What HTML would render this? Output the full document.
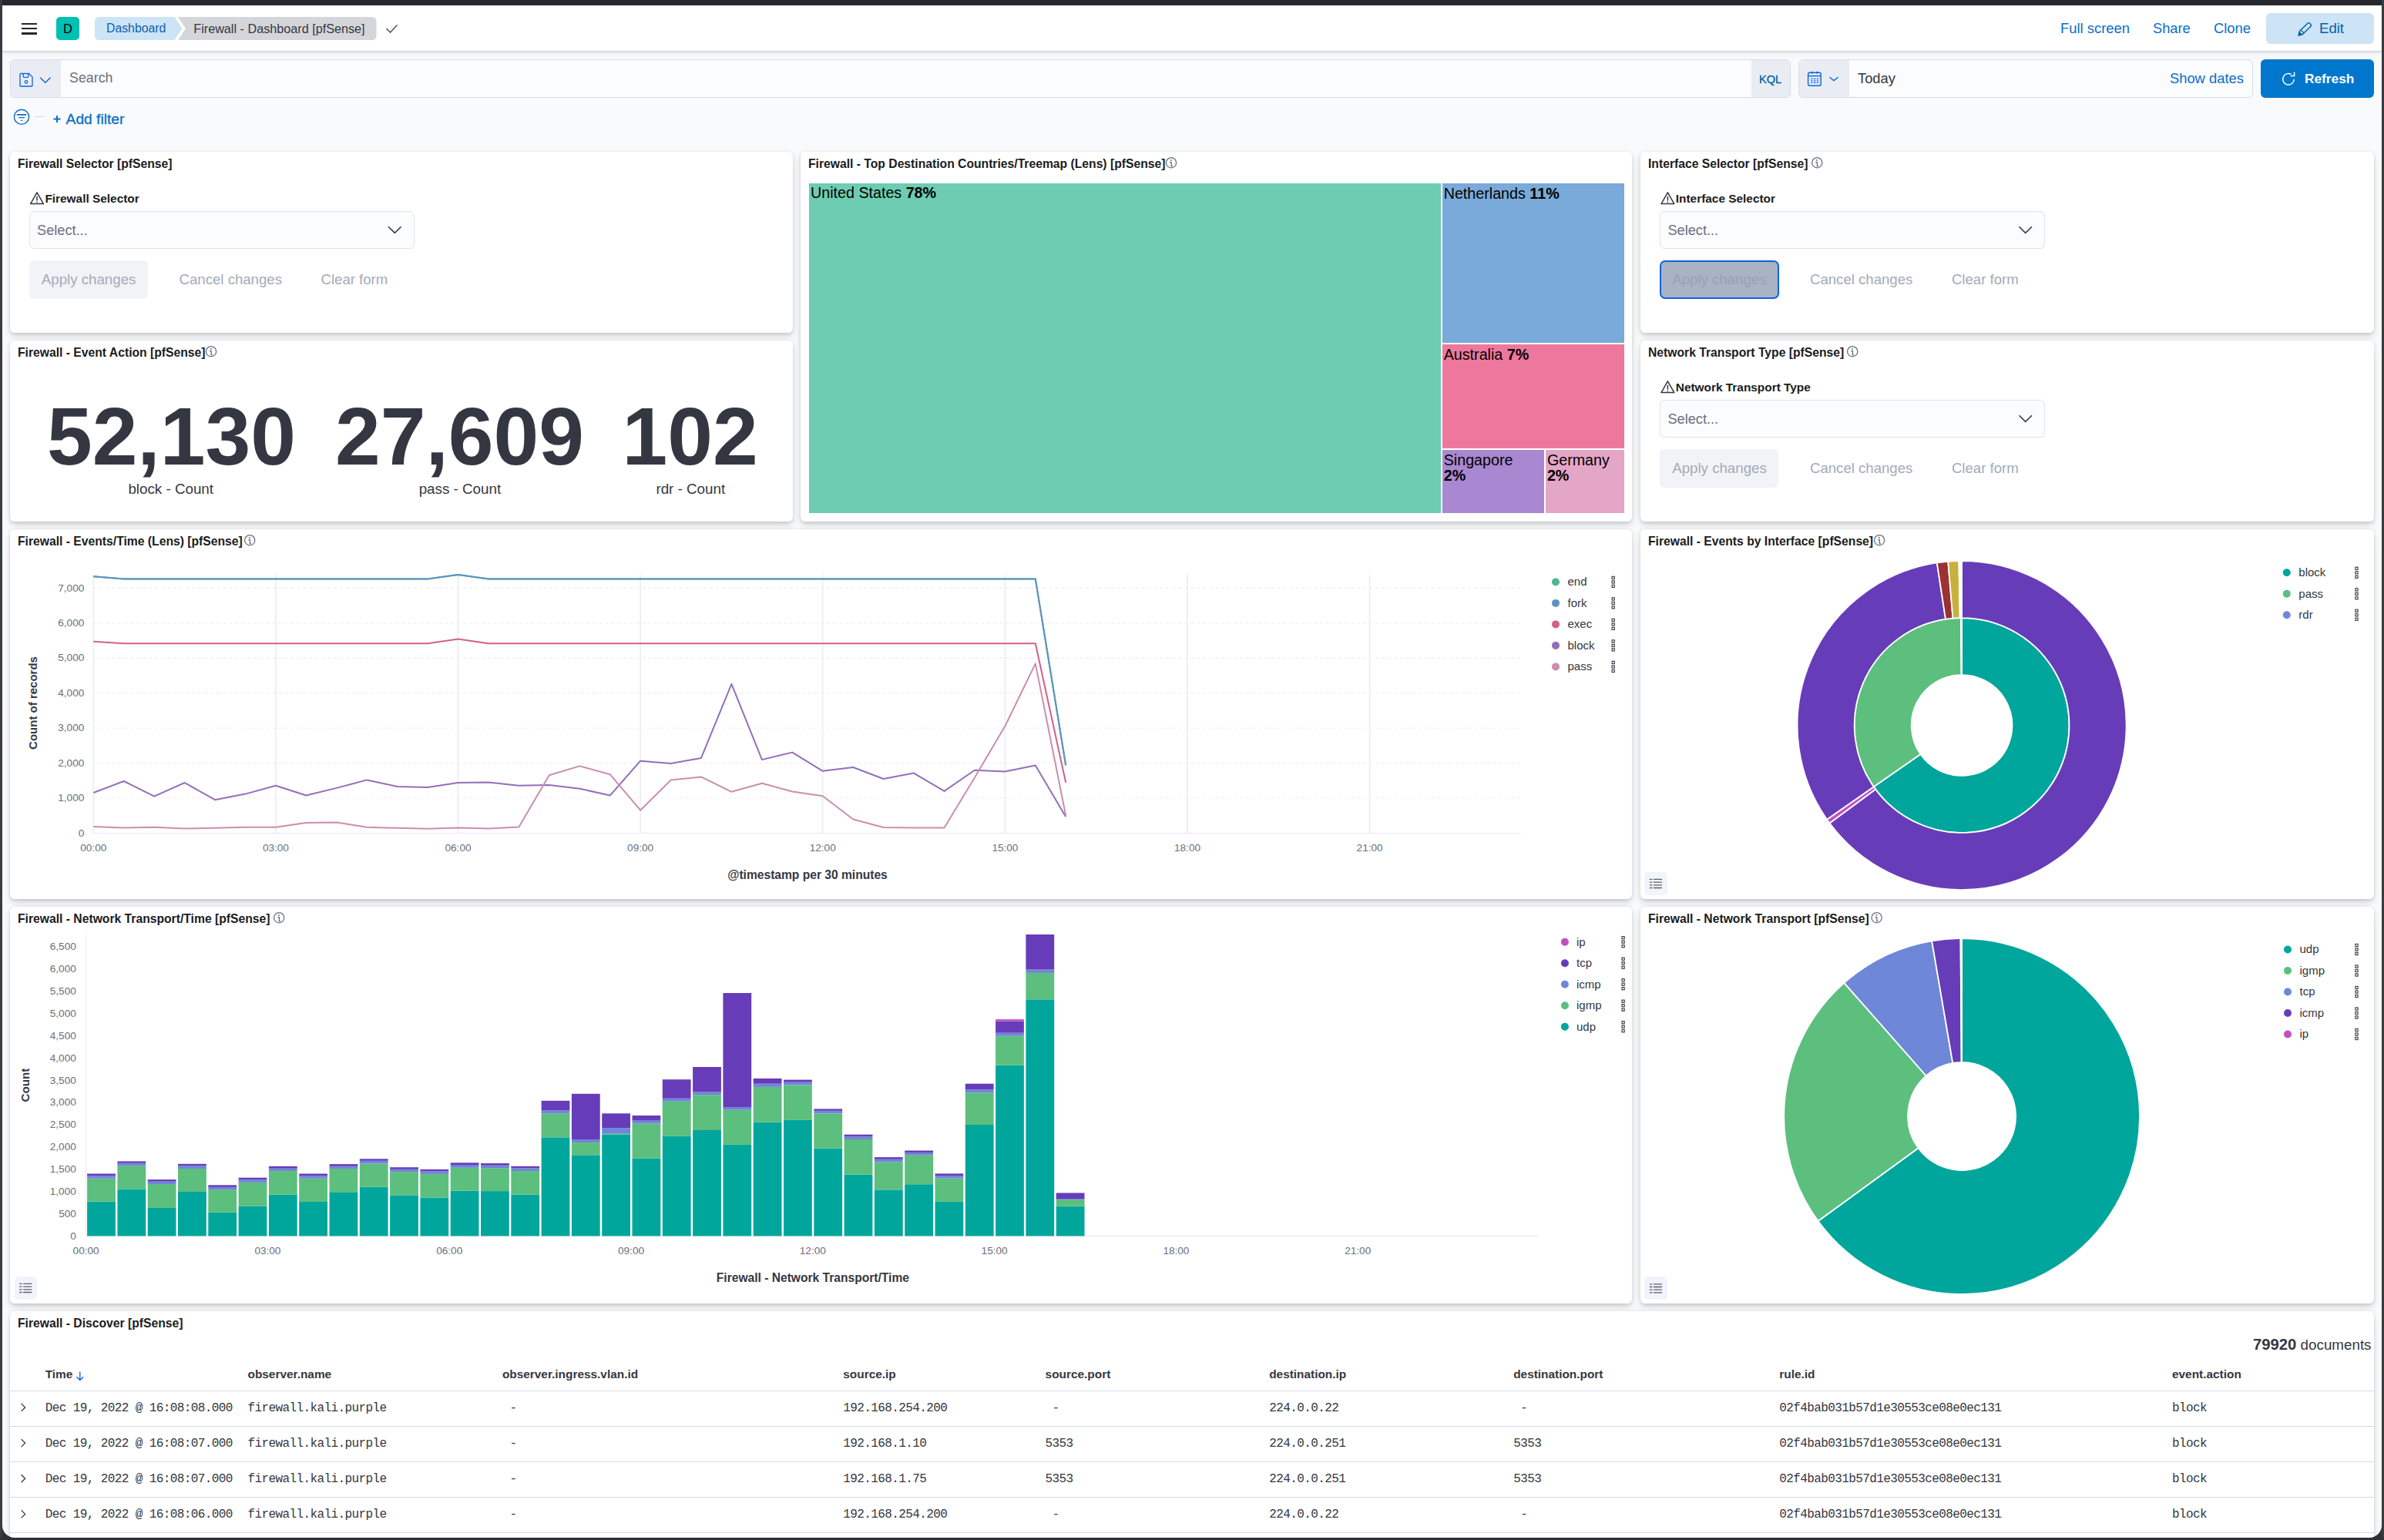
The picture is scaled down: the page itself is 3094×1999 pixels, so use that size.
<!DOCTYPE html><html><head><meta charset="utf-8"><style>
html,body{margin:0;padding:0;width:3094px;height:1999px;overflow:hidden;background:#f7f8fc;font-family:"Liberation Sans",sans-serif}
.r{position:absolute}
.t{position:absolute;white-space:nowrap}
svg{position:absolute;overflow:visible}
</style></head><body>
<div class="r" style="left:0.0px;top:0.0px;width:3094.0px;height:1999.0px;background:#f9fafc;"></div>
<div class="r" style="left:13.0px;top:197.0px;width:1016.0px;height:235.0px;background:#fff;border-radius:6px;box-shadow:0 1.5px 4px rgba(0,0,0,0.11),0 3.5px 9px rgba(0,0,0,0.075),0 7px 13px rgba(0,0,0,0.05);"></div>
<div class="r" style="left:1039.0px;top:197.0px;width:1079.0px;height:480.0px;background:#fff;border-radius:6px;box-shadow:0 1.5px 4px rgba(0,0,0,0.11),0 3.5px 9px rgba(0,0,0,0.075),0 7px 13px rgba(0,0,0,0.05);"></div>
<div class="r" style="left:2129.0px;top:197.0px;width:952.0px;height:235.0px;background:#fff;border-radius:6px;box-shadow:0 1.5px 4px rgba(0,0,0,0.11),0 3.5px 9px rgba(0,0,0,0.075),0 7px 13px rgba(0,0,0,0.05);"></div>
<div class="r" style="left:13.0px;top:442.0px;width:1016.0px;height:235.0px;background:#fff;border-radius:6px;box-shadow:0 1.5px 4px rgba(0,0,0,0.11),0 3.5px 9px rgba(0,0,0,0.075),0 7px 13px rgba(0,0,0,0.05);"></div>
<div class="r" style="left:2129.0px;top:442.0px;width:952.0px;height:235.0px;background:#fff;border-radius:6px;box-shadow:0 1.5px 4px rgba(0,0,0,0.11),0 3.5px 9px rgba(0,0,0,0.075),0 7px 13px rgba(0,0,0,0.05);"></div>
<div class="r" style="left:13.0px;top:687.0px;width:2105.0px;height:480.0px;background:#fff;border-radius:6px;box-shadow:0 1.5px 4px rgba(0,0,0,0.11),0 3.5px 9px rgba(0,0,0,0.075),0 7px 13px rgba(0,0,0,0.05);"></div>
<div class="r" style="left:2129.0px;top:687.0px;width:952.0px;height:480.0px;background:#fff;border-radius:6px;box-shadow:0 1.5px 4px rgba(0,0,0,0.11),0 3.5px 9px rgba(0,0,0,0.075),0 7px 13px rgba(0,0,0,0.05);"></div>
<div class="r" style="left:13.0px;top:1177.0px;width:2105.0px;height:515.0px;background:#fff;border-radius:6px;box-shadow:0 1.5px 4px rgba(0,0,0,0.11),0 3.5px 9px rgba(0,0,0,0.075),0 7px 13px rgba(0,0,0,0.05);"></div>
<div class="r" style="left:2129.0px;top:1177.0px;width:952.0px;height:515.0px;background:#fff;border-radius:6px;box-shadow:0 1.5px 4px rgba(0,0,0,0.11),0 3.5px 9px rgba(0,0,0,0.075),0 7px 13px rgba(0,0,0,0.05);"></div>
<div class="r" style="left:13.0px;top:1702.0px;width:3068.0px;height:328.0px;background:#fff;border-radius:6px;box-shadow:0 1.5px 4px rgba(0,0,0,0.11),0 3.5px 9px rgba(0,0,0,0.075),0 7px 13px rgba(0,0,0,0.05);"></div>
<div class="t" style="left:23.0px;top:205.2px;font-size:15.7px;line-height:15.7px;color:#1a1c21;font-weight:bold;font-family:'Liberation Sans', sans-serif;">Firewall Selector [pfSense]</div>
<div class="t" style="left:1049.0px;top:205.2px;font-size:15.7px;line-height:15.7px;color:#1a1c21;font-weight:bold;font-family:'Liberation Sans', sans-serif;">Firewall - Top Destination Countries/Treemap (Lens) [pfSense]</div>
<svg style="left:1511px;top:202px;" width="18" height="18" viewBox="1511 202 18 18"><circle cx="1520" cy="211.2" r="6.6" fill="none" stroke="#69707d" stroke-width="1.3"/><circle cx="1519.8" cy="208.0" r="1" fill="#69707d"/><path d="M1518 210.6 H1520.2 V215.5 H1521.8" fill="none" stroke="#69707d" stroke-width="1.3"/></svg>
<div class="t" style="left:2139.0px;top:205.2px;font-size:15.7px;line-height:15.7px;color:#1a1c21;font-weight:bold;font-family:'Liberation Sans', sans-serif;">Interface Selector [pfSense]</div>
<svg style="left:2349px;top:202px;" width="18" height="18" viewBox="2349 202 18 18"><circle cx="2358.2" cy="211.2" r="6.6" fill="none" stroke="#69707d" stroke-width="1.3"/><circle cx="2358.0" cy="208.0" r="1" fill="#69707d"/><path d="M2356.2 210.6 H2358.3999999999996 V215.5 H2360.0" fill="none" stroke="#69707d" stroke-width="1.3"/></svg>
<div class="t" style="left:23.0px;top:450.2px;font-size:15.7px;line-height:15.7px;color:#1a1c21;font-weight:bold;font-family:'Liberation Sans', sans-serif;">Firewall - Event Action [pfSense]</div>
<svg style="left:265px;top:447px;" width="18" height="18" viewBox="265 447 18 18"><circle cx="274" cy="456.2" r="6.6" fill="none" stroke="#69707d" stroke-width="1.3"/><circle cx="273.8" cy="453.0" r="1" fill="#69707d"/><path d="M272 455.59999999999997 H274.2 V460.5 H275.8" fill="none" stroke="#69707d" stroke-width="1.3"/></svg>
<div class="t" style="left:2139.0px;top:450.2px;font-size:15.7px;line-height:15.7px;color:#1a1c21;font-weight:bold;font-family:'Liberation Sans', sans-serif;">Network Transport Type [pfSense]</div>
<svg style="left:2395px;top:447px;" width="18" height="18" viewBox="2395 447 18 18"><circle cx="2404.2" cy="456.2" r="6.6" fill="none" stroke="#69707d" stroke-width="1.3"/><circle cx="2404.0" cy="453.0" r="1" fill="#69707d"/><path d="M2402.2 455.59999999999997 H2404.3999999999996 V460.5 H2406.0" fill="none" stroke="#69707d" stroke-width="1.3"/></svg>
<div class="t" style="left:23.0px;top:695.2px;font-size:15.7px;line-height:15.7px;color:#1a1c21;font-weight:bold;font-family:'Liberation Sans', sans-serif;">Firewall - Events/Time (Lens) [pfSense]</div>
<svg style="left:315px;top:692px;" width="18" height="18" viewBox="315 692 18 18"><circle cx="324.2" cy="701.2" r="6.6" fill="none" stroke="#69707d" stroke-width="1.3"/><circle cx="324.0" cy="698.0" r="1" fill="#69707d"/><path d="M322.2 700.6 H324.4 V705.5 H326.0" fill="none" stroke="#69707d" stroke-width="1.3"/></svg>
<div class="t" style="left:2139.0px;top:695.2px;font-size:15.7px;line-height:15.7px;color:#1a1c21;font-weight:bold;font-family:'Liberation Sans', sans-serif;">Firewall - Events by Interface [pfSense]</div>
<svg style="left:2430px;top:692px;" width="18" height="18" viewBox="2430 692 18 18"><circle cx="2439.1" cy="701.2" r="6.6" fill="none" stroke="#69707d" stroke-width="1.3"/><circle cx="2438.9" cy="698.0" r="1" fill="#69707d"/><path d="M2437.1 700.6 H2439.2999999999997 V705.5 H2440.9" fill="none" stroke="#69707d" stroke-width="1.3"/></svg>
<div class="t" style="left:23.0px;top:1185.2px;font-size:15.7px;line-height:15.7px;color:#1a1c21;font-weight:bold;font-family:'Liberation Sans', sans-serif;">Firewall - Network Transport/Time [pfSense]</div>
<svg style="left:353px;top:1182px;" width="18" height="18" viewBox="353 1182 18 18"><circle cx="362.2" cy="1191.2" r="6.6" fill="none" stroke="#69707d" stroke-width="1.3"/><circle cx="362.0" cy="1188.0" r="1" fill="#69707d"/><path d="M360.2 1190.6000000000001 H362.4 V1195.5 H364.0" fill="none" stroke="#69707d" stroke-width="1.3"/></svg>
<div class="t" style="left:2139.0px;top:1185.2px;font-size:15.7px;line-height:15.7px;color:#1a1c21;font-weight:bold;font-family:'Liberation Sans', sans-serif;">Firewall - Network Transport [pfSense]</div>
<svg style="left:2426px;top:1182px;" width="18" height="18" viewBox="2426 1182 18 18"><circle cx="2435.6" cy="1191.2" r="6.6" fill="none" stroke="#69707d" stroke-width="1.3"/><circle cx="2435.4" cy="1188.0" r="1" fill="#69707d"/><path d="M2433.6 1190.6000000000001 H2435.7999999999997 V1195.5 H2437.4" fill="none" stroke="#69707d" stroke-width="1.3"/></svg>
<div class="t" style="left:23.0px;top:1710.2px;font-size:15.7px;line-height:15.7px;color:#1a1c21;font-weight:bold;font-family:'Liberation Sans', sans-serif;">Firewall - Discover [pfSense]</div>
<div class="r" style="left:3.0px;top:6.0px;width:3088.0px;height:60.0px;background:#fff;box-shadow:0 1px 0 #cfd4de,0 2px 3px rgba(0,0,0,0.10),0 4px 9px rgba(0,0,0,0.05);"></div>
<div class="r" style="left:28.0px;top:29.5px;width:20.0px;height:2.4px;background:#25282f;"></div>
<div class="r" style="left:28.0px;top:35.9px;width:20.0px;height:2.4px;background:#25282f;"></div>
<div class="r" style="left:28.0px;top:42.3px;width:20.0px;height:2.4px;background:#25282f;"></div>
<div class="r" style="left:73.0px;top:22.0px;width:30.0px;height:30.0px;background:#00bfb3;border-radius:5px;"></div>
<div class="t" style="left:-512.0px;width:1200px;text-align:center;top:29.0px;font-size:16.5px;line-height:16.5px;color:#000;font-weight:normal;font-family:'Liberation Sans', sans-serif;">D</div>
<svg style="left:120px;top:20px;" width="375" height="35" viewBox="120 20 375 35"><path d="M129 22 H226.5 L236.5 37 L226.5 52 H129 Q123 52 123 46 V28 Q123 22 129 22 Z" fill="#cce4f5"/><path d="M231 22 H482.5 Q488.5 22 488.5 28 V46 Q488.5 52 482.5 52 H231 L241 37 Z" fill="#d4d6da"/></svg>
<div class="t" style="left:138.0px;top:28.9px;font-size:15.8px;line-height:15.8px;color:#0f5fb0;font-weight:normal;font-family:'Liberation Sans', sans-serif;">Dashboard</div>
<div class="t" style="left:251.3px;top:28.6px;font-size:16.2px;line-height:16.2px;color:#343741;font-weight:normal;font-family:'Liberation Sans', sans-serif;">Firewall - Dashboard [pfSense]</div>
<svg style="left:495px;top:25px;" width="27" height="23" viewBox="495 25 27 23"><path d="M501.5 37 L506.5 42 L515.5 32.5" fill="none" stroke="#535966" stroke-width="1.6"/></svg>
<div class="t" style="left:2674.0px;top:27.7px;font-size:18.4px;line-height:18.4px;color:#0b6ec5;font-weight:normal;font-family:'Liberation Sans', sans-serif;">Full screen</div>
<div class="t" style="left:2794.0px;top:27.8px;font-size:18.3px;line-height:18.3px;color:#0b6ec5;font-weight:normal;font-family:'Liberation Sans', sans-serif;">Share</div>
<div class="t" style="left:2873.0px;top:27.7px;font-size:18.4px;line-height:18.4px;color:#0b6ec5;font-weight:normal;font-family:'Liberation Sans', sans-serif;">Clone</div>
<div class="r" style="left:2941.0px;top:17.0px;width:140.0px;height:40.0px;background:#cce4f5;border-radius:6px;"></div>
<svg style="left:2978px;top:25px;" width="24" height="24" viewBox="2978 25 24 24"><path d="M2983 46 L2984.2 40.8 L2994.6 30.4 Q2996.2 28.8 2997.8 30.4 L2998.6 31.2 Q3000.2 32.8 2998.6 34.4 L2988.2 44.8 Z" fill="none" stroke="#0061a6" stroke-width="1.4" stroke-linejoin="round"/><path d="M2986 38.9 L2990.1 43" stroke="#0061a6" stroke-width="1.3"/><path d="M2983 46 L2984.2 40.8 L2988.2 44.8 Z" fill="#0061a6"/></svg>
<div class="t" style="left:3010.0px;top:27.6px;font-size:18.6px;line-height:18.6px;color:#0061a6;font-weight:normal;font-family:'Liberation Sans', sans-serif;">Edit</div>
<div class="r" style="left:13.0px;top:77.0px;width:2310.5px;height:50.0px;background:#fbfcfd;border:1px solid #d5dbe8;border-radius:6px;box-sizing:border-box;"></div>
<div class="r" style="left:14.0px;top:78.0px;width:65.0px;height:48.0px;background:#e9edf3;border-radius:5px 0 0 5px;"></div>
<div class="r" style="left:2273.0px;top:78.0px;width:49.5px;height:48.0px;background:#e9edf3;border-radius:0 5px 5px 0;"></div>
<svg style="left:20px;top:88px;" width="52" height="30" viewBox="20 88 52 30"><path d="M26 96.5 Q26 95.5 27 95.5 H37.6 L42 99.9 V111 Q42 112 41 112 H27 Q26 112 26 111 Z" fill="none" stroke="#0b64dd" stroke-width="1.3" stroke-linejoin="round"/><path d="M30.2 95.5 V99.6 Q30.2 100.4 31 100.4 H36 Q36.8 100.4 36.8 99.6 V95.5" fill="none" stroke="#0b64dd" stroke-width="1.3"/><circle cx="34" cy="106.5" r="1.8" fill="none" stroke="#0b64dd" stroke-width="1.2"/><path d="M52.2 100.8 L58.8 107.2 L65.4 100.8" fill="none" stroke="#0b64dd" stroke-width="1.4"/></svg>
<div class="t" style="left:90.1px;top:93.2px;font-size:17.8px;line-height:17.8px;color:#69707d;font-weight:normal;font-family:'Liberation Sans', sans-serif;">Search</div>
<div class="t" style="left:1697.6px;width:1200px;text-align:center;top:95.8px;font-size:14.6px;line-height:14.6px;color:#0061a6;font-weight:normal;font-family:'Liberation Sans', sans-serif;-webkit-text-stroke:0.35px #0061a6;">KQL</div>
<div class="r" style="left:2334.0px;top:77.0px;width:590.0px;height:50.0px;background:#fbfcfd;border:1px solid #d5dbe8;border-radius:6px;box-sizing:border-box;"></div>
<div class="r" style="left:2335.0px;top:78.0px;width:65.0px;height:48.0px;background:#e9edf3;border-radius:5px 0 0 5px;"></div>
<svg style="left:2340px;top:85px;" width="55" height="35" viewBox="2340 85 55 35"><rect x="2346.6" y="94.2" width="16.6" height="17" rx="2.2" fill="none" stroke="#0b64dd" stroke-width="1.4"/><path d="M2346.6 98.6 H2363.2" stroke="#0b64dd" stroke-width="1.4"/><path d="M2351.6 92.8 V95.8 M2358.2 92.8 V95.8" stroke="#0b64dd" stroke-width="1.5"/><path d="M2350.2 102.4 H2360.2 M2350.2 104.9 H2360.2 M2350.2 107.4 H2360.2" stroke="#0b64dd" stroke-width="1.2" stroke-dasharray="2.4 1.4"/><path d="M2374.4 100.2 L2380 104.6 L2385.6 100.2" fill="none" stroke="#0b64dd" stroke-width="1.3"/></svg>
<div class="t" style="left:2411.0px;top:93.0px;font-size:18.3px;line-height:18.3px;color:#343741;font-weight:normal;font-family:'Liberation Sans', sans-serif;">Today</div>
<div class="t" style="right:182.0px;top:92.9px;font-size:18.4px;line-height:18.4px;color:#0b6ec5;font-weight:normal;font-family:'Liberation Sans', sans-serif;">Show dates</div>
<div class="r" style="left:2934.0px;top:77.0px;width:147.0px;height:50.0px;background:#0077cc;border-radius:6px;"></div>
<svg style="left:2955px;top:88px;" width="30" height="28" viewBox="2955 88 30 28"><path d="M2977.3 103 A7.3 7.3 0 1 1 2973.6 96.4" fill="none" stroke="#fff" stroke-width="1.5"/><path d="M2977.6 93.6 V98.6 H2972.6" fill="none" stroke="#fff" stroke-width="1.5"/></svg>
<div class="t" style="left:2991.0px;top:93.9px;font-size:17.3px;line-height:17.3px;color:#fff;font-weight:bold;font-family:'Liberation Sans', sans-serif;">Refresh</div>
<svg style="left:14px;top:138px;" width="76" height="28" viewBox="14 138 76 28"><circle cx="28" cy="151.8" r="9.6" fill="none" stroke="#0b6ec5" stroke-width="1.4"/><path d="M22.5 148.8 H33.5" stroke="#0b6ec5" stroke-width="1.8" stroke-linecap="round"/><path d="M24.6 152.6 H31.4" stroke="#0b6ec5" stroke-width="1.4" stroke-linecap="round"/><path d="M27.4 156.4 H28.6" stroke="#0b6ec5" stroke-width="1.4" stroke-linecap="round"/><path d="M45.5 151.3 H58" stroke="#d3dae6" stroke-width="1.2"/><path d="M69.5 154.5 H78.6 M74.05 150 V159" stroke="#0b6ec5" stroke-width="2"/></svg>
<div class="t" style="left:85.6px;top:145.0px;font-size:19.2px;line-height:19.2px;color:#0b6ec5;font-weight:normal;font-family:'Liberation Sans', sans-serif;-webkit-text-stroke:0.3px #0b6ec5;">Add filter</div>
<svg style="left:36px;top:246px;" width="24" height="22" viewBox="36 246 24 22"><path d="M48 249.8 L56.4 264.6 H39.6 Z" fill="none" stroke="#343741" stroke-width="1.5" stroke-linejoin="round"/><path d="M48 254.8 V260.6" stroke="#343741" stroke-width="1.5"/><circle cx="48" cy="262.4" r="0.8" fill="#343741"/></svg>
<div class="t" style="left:58.4px;top:250.4px;font-size:15.4px;line-height:15.4px;color:#1a1c21;font-weight:bold;font-family:'Liberation Sans', sans-serif;">Firewall Selector</div>
<div class="r" style="left:38.0px;top:273.5px;width:500.0px;height:49.0px;background:#fbfcfd;border:1px solid #dfe3ec;border-radius:6px;box-sizing:border-box;"></div>
<div class="t" style="left:48.0px;top:289.5px;font-size:18.2px;line-height:18.2px;color:#69707d;font-weight:normal;font-family:'Liberation Sans', sans-serif;">Select...</div>
<svg style="left:500px;top:290px;" width="25" height="17" viewBox="500 290 25 17"><path d="M504 294.2 L512.3 302.4 L520.6 294.2" fill="none" stroke="#343741" stroke-width="1.5"/></svg>
<div class="r" style="left:38.0px;top:338.3px;width:154.0px;height:49.4px;background:#f1f3f7;border-radius:6px;"></div>
<div class="t" style="left:53.8px;top:354.2px;font-size:18.7px;line-height:18.7px;color:#a2abba;font-weight:normal;font-family:'Liberation Sans', sans-serif;">Apply changes</div>
<div class="t" style="left:232.6px;top:354.3px;font-size:18.6px;line-height:18.6px;color:#a2abba;font-weight:normal;font-family:'Liberation Sans', sans-serif;">Cancel changes</div>
<div class="t" style="left:416.5px;top:354.3px;font-size:18.6px;line-height:18.6px;color:#a2abba;font-weight:normal;font-family:'Liberation Sans', sans-serif;">Clear form</div>
<svg style="left:2152px;top:246px;" width="24" height="22" viewBox="2152 246 24 22"><path d="M2164.4 249.8 L2172.8 264.6 H2156.0 Z" fill="none" stroke="#343741" stroke-width="1.5" stroke-linejoin="round"/><path d="M2164.4 254.8 V260.6" stroke="#343741" stroke-width="1.5"/><circle cx="2164.4" cy="262.4" r="0.8" fill="#343741"/></svg>
<div class="t" style="left:2174.8px;top:250.4px;font-size:15.4px;line-height:15.4px;color:#1a1c21;font-weight:bold;font-family:'Liberation Sans', sans-serif;">Interface Selector</div>
<div class="r" style="left:2154.4px;top:273.5px;width:500.0px;height:49.0px;background:#fbfcfd;border:1px solid #dfe3ec;border-radius:6px;box-sizing:border-box;"></div>
<div class="t" style="left:2164.4px;top:289.5px;font-size:18.2px;line-height:18.2px;color:#69707d;font-weight:normal;font-family:'Liberation Sans', sans-serif;">Select...</div>
<svg style="left:2616px;top:290px;" width="25" height="17" viewBox="2616 290 25 17"><path d="M2620.4 294.2 L2628.7 302.4 L2637.0 294.2" fill="none" stroke="#343741" stroke-width="1.5"/></svg>
<div class="r" style="left:2154.4px;top:338.3px;width:154.5px;height:49.7px;background:#a9b3c3;border:2.5px solid #0b64dd;border-radius:7px;box-sizing:border-box;"></div>
<div class="t" style="left:2170.2px;top:354.2px;font-size:18.7px;line-height:18.7px;color:#98a2b3;font-weight:normal;font-family:'Liberation Sans', sans-serif;">Apply changes</div>
<div class="t" style="left:2349.0px;top:354.3px;font-size:18.6px;line-height:18.6px;color:#a2abba;font-weight:normal;font-family:'Liberation Sans', sans-serif;">Cancel changes</div>
<div class="t" style="left:2532.9px;top:354.3px;font-size:18.6px;line-height:18.6px;color:#a2abba;font-weight:normal;font-family:'Liberation Sans', sans-serif;">Clear form</div>
<svg style="left:2152px;top:491px;" width="24" height="22" viewBox="2152 491 24 22"><path d="M2164.4 494.8 L2172.8 509.6 H2156.0 Z" fill="none" stroke="#343741" stroke-width="1.5" stroke-linejoin="round"/><path d="M2164.4 499.8 V505.6" stroke="#343741" stroke-width="1.5"/><circle cx="2164.4" cy="507.4" r="0.8" fill="#343741"/></svg>
<div class="t" style="left:2174.8px;top:495.4px;font-size:15.4px;line-height:15.4px;color:#1a1c21;font-weight:bold;font-family:'Liberation Sans', sans-serif;">Network Transport Type</div>
<div class="r" style="left:2154.4px;top:518.5px;width:500.0px;height:49.0px;background:#fbfcfd;border:1px solid #dfe3ec;border-radius:6px;box-sizing:border-box;"></div>
<div class="t" style="left:2164.4px;top:534.5px;font-size:18.2px;line-height:18.2px;color:#69707d;font-weight:normal;font-family:'Liberation Sans', sans-serif;">Select...</div>
<svg style="left:2616px;top:535px;" width="25" height="17" viewBox="2616 535 25 17"><path d="M2620.4 539.2 L2628.7 547.4 L2637.0 539.2" fill="none" stroke="#343741" stroke-width="1.5"/></svg>
<div class="r" style="left:2154.4px;top:583.3px;width:154.0px;height:49.4px;background:#f1f3f7;border-radius:6px;"></div>
<div class="t" style="left:2170.2px;top:599.2px;font-size:18.7px;line-height:18.7px;color:#a2abba;font-weight:normal;font-family:'Liberation Sans', sans-serif;">Apply changes</div>
<div class="t" style="left:2349.0px;top:599.3px;font-size:18.6px;line-height:18.6px;color:#a2abba;font-weight:normal;font-family:'Liberation Sans', sans-serif;">Cancel changes</div>
<div class="t" style="left:2532.9px;top:599.3px;font-size:18.6px;line-height:18.6px;color:#a2abba;font-weight:normal;font-family:'Liberation Sans', sans-serif;">Clear form</div>
<div class="r" style="left:1050.0px;top:238.0px;width:820.0px;height:427.6px;background:#6dccb1;"></div>
<div class="r" style="left:1871.7px;top:238.0px;width:236.3px;height:206.6px;background:#79aad9;"></div>
<div class="r" style="left:1871.7px;top:447.0px;width:236.3px;height:135.3px;background:#ee789d;"></div>
<div class="r" style="left:1871.7px;top:584.4px;width:132.0px;height:81.2px;background:#a987d1;"></div>
<div class="r" style="left:2005.8px;top:584.4px;width:102.2px;height:81.2px;background:#e4a6c7;"></div>
<div class="t" style="left:1052.0px;top:241.3px;font-size:19.7px;line-height:19.7px;color:#000;font-weight:normal;font-family:'Liberation Sans', sans-serif;">United States <b>78%</b></div>
<div class="t" style="left:1873.7px;top:241.5px;font-size:19.7px;line-height:19.7px;color:#000;font-weight:normal;font-family:'Liberation Sans', sans-serif;">Netherlands <b>11%</b></div>
<div class="t" style="left:1873.7px;top:450.6px;font-size:19.7px;line-height:19.7px;color:#000;font-weight:normal;font-family:'Liberation Sans', sans-serif;">Australia <b>7%</b></div>
<div class="t" style="left:1873.7px;top:588.0px;font-size:19.7px;line-height:19.7px;color:#000;font-weight:normal;font-family:'Liberation Sans', sans-serif;">Singapore</div>
<div class="t" style="left:1873.7px;top:608.0px;font-size:19.7px;line-height:19.7px;color:#000;font-weight:normal;font-family:'Liberation Sans', sans-serif;"><b>2%</b></div>
<div class="t" style="left:2007.9px;top:588.0px;font-size:19.7px;line-height:19.7px;color:#000;font-weight:normal;font-family:'Liberation Sans', sans-serif;">Germany</div>
<div class="t" style="left:2007.9px;top:608.0px;font-size:19.7px;line-height:19.7px;color:#000;font-weight:normal;font-family:'Liberation Sans', sans-serif;"><b>2%</b></div>
<div class="t" style="left:-377.6px;width:1200px;text-align:center;top:513.9px;font-size:105.6px;line-height:105.6px;color:#343741;font-weight:bold;font-family:'Liberation Sans', sans-serif;">52,130</div>
<div class="t" style="left:-3.5px;width:1200px;text-align:center;top:513.9px;font-size:105.6px;line-height:105.6px;color:#343741;font-weight:bold;font-family:'Liberation Sans', sans-serif;">27,609</div>
<div class="t" style="left:295.7px;width:1200px;text-align:center;top:513.9px;font-size:105.6px;line-height:105.6px;color:#343741;font-weight:bold;font-family:'Liberation Sans', sans-serif;">102</div>
<div class="t" style="left:-378.3px;width:1200px;text-align:center;top:626.1px;font-size:18.8px;line-height:18.8px;color:#343741;font-weight:normal;font-family:'Liberation Sans', sans-serif;">block - Count</div>
<div class="t" style="left:-3.1px;width:1200px;text-align:center;top:626.1px;font-size:18.8px;line-height:18.8px;color:#343741;font-weight:normal;font-family:'Liberation Sans', sans-serif;">pass - Count</div>
<div class="t" style="left:296.3px;width:1200px;text-align:center;top:626.1px;font-size:18.8px;line-height:18.8px;color:#343741;font-weight:normal;font-family:'Liberation Sans', sans-serif;">rdr - Count</div>
<svg style="left:100px;top:730px;" width="1900" height="360" viewBox="100 730 1900 360"><path d="M121.3 1036.0 H1973.4" stroke="#eceef2" stroke-width="1.2" stroke-dasharray="4 4"/><path d="M121.3 990.6 H1973.4" stroke="#eceef2" stroke-width="1.2" stroke-dasharray="4 4"/><path d="M121.3 945.1 H1973.4" stroke="#eceef2" stroke-width="1.2" stroke-dasharray="4 4"/><path d="M121.3 899.7 H1973.4" stroke="#eceef2" stroke-width="1.2" stroke-dasharray="4 4"/><path d="M121.3 854.2 H1973.4" stroke="#eceef2" stroke-width="1.2" stroke-dasharray="4 4"/><path d="M121.3 808.8 H1973.4" stroke="#eceef2" stroke-width="1.2" stroke-dasharray="4 4"/><path d="M121.3 763.3 H1973.4" stroke="#eceef2" stroke-width="1.2" stroke-dasharray="4 4"/><path d="M121.3 746 V1081.5" stroke="#eceef2" stroke-width="1.8"/><path d="M357.9 746 V1081.5" stroke="#eceef2" stroke-width="1.8"/><path d="M594.5 746 V1081.5" stroke="#eceef2" stroke-width="1.8"/><path d="M831.1 746 V1081.5" stroke="#eceef2" stroke-width="1.8"/><path d="M1067.7 746 V1081.5" stroke="#eceef2" stroke-width="1.8"/><path d="M1304.4 746 V1081.5" stroke="#eceef2" stroke-width="1.8"/><path d="M1541.0 746 V1081.5" stroke="#eceef2" stroke-width="1.8"/><path d="M1777.6 746 V1081.5" stroke="#eceef2" stroke-width="1.8"/><path d="M121.3 1081.5 H1973.4" stroke="#eceef2" stroke-width="1.5"/><polyline points="121.3,748.3 160.7,751.6 200.2,751.6 239.6,751.6 279.0,751.6 318.5,751.6 357.9,751.6 397.3,751.6 436.8,751.6 476.2,751.6 515.6,751.6 555.1,751.6 594.5,745.9 634.0,751.6 673.4,751.6 712.8,751.6 752.3,751.6 791.7,751.6 831.1,751.6 870.6,751.6 910.0,751.6 949.4,751.6 988.9,751.6 1028.3,751.6 1067.7,751.6 1107.2,751.6 1146.6,751.6 1186.0,751.6 1225.5,751.6 1264.9,751.6 1304.4,751.6 1343.8,751.6 1383.2,993.5" fill="none" stroke="#54b399" stroke-width="2" stroke-linejoin="round"/><polyline points="121.3,748.3 160.7,751.6 200.2,751.6 239.6,751.6 279.0,751.6 318.5,751.6 357.9,751.6 397.3,751.6 436.8,751.6 476.2,751.6 515.6,751.6 555.1,751.6 594.5,745.9 634.0,751.6 673.4,751.6 712.8,751.6 752.3,751.6 791.7,751.6 831.1,751.6 870.6,751.6 910.0,751.6 949.4,751.6 988.9,751.6 1028.3,751.6 1067.7,751.6 1107.2,751.6 1146.6,751.6 1186.0,751.6 1225.5,751.6 1264.9,751.6 1304.4,751.6 1343.8,751.6 1383.2,993.5" fill="none" stroke="#6092c0" stroke-width="2" stroke-linejoin="round"/><polyline points="121.3,832.7 160.7,835.2 200.2,835.2 239.6,835.2 279.0,835.2 318.5,835.2 357.9,835.2 397.3,835.2 436.8,835.2 476.2,835.2 515.6,835.2 555.1,835.2 594.5,829.5 634.0,835.2 673.4,835.2 712.8,835.2 752.3,835.2 791.7,835.2 831.1,835.2 870.6,835.2 910.0,835.2 949.4,835.2 988.9,835.2 1028.3,835.2 1067.7,835.2 1107.2,835.2 1146.6,835.2 1186.0,835.2 1225.5,835.2 1264.9,835.2 1304.4,835.2 1343.8,835.2 1383.2,1015.7" fill="none" stroke="#d36086" stroke-width="2" stroke-linejoin="round"/><polyline points="121.3,1029.0 160.7,1014.0 200.2,1033.7 239.6,1016.0 279.0,1038.2 318.5,1030.6 357.9,1019.7 397.3,1032.5 436.8,1022.9 476.2,1012.4 515.6,1021.0 555.1,1022.0 594.5,1016.0 634.0,1015.6 673.4,1019.7 712.8,1018.9 752.3,1023.7 791.7,1032.6 831.1,987.7 870.6,990.9 910.0,983.9 949.4,887.8 988.9,986.1 1028.3,976.6 1067.7,1000.8 1107.2,996.0 1146.6,1011.0 1186.0,1003.6 1225.5,1026.9 1264.9,999.8 1304.4,1001.4 1343.8,993.5 1383.2,1060.3" fill="none" stroke="#9170b8" stroke-width="2" stroke-linejoin="round"/><polyline points="121.3,1072.9 160.7,1074.5 200.2,1073.8 239.6,1075.4 279.0,1074.8 318.5,1073.8 357.9,1073.8 397.3,1068.1 436.8,1067.5 476.2,1073.8 515.6,1074.8 555.1,1075.7 594.5,1074.5 634.0,1075.4 673.4,1073.5 712.8,1006.2 752.3,994.4 791.7,1005.2 831.1,1051.7 870.6,1012.6 910.0,1008.4 949.4,1027.8 988.9,1016.7 1028.3,1027.5 1067.7,1033.2 1107.2,1063.5 1146.6,1074.0 1186.0,1074.6 1225.5,1074.6 1264.9,1009.4 1304.4,942.5 1343.8,861.4 1383.2,1058.7" fill="none" stroke="#ca8eae" stroke-width="2" stroke-linejoin="round"/></svg>
<div class="t" style="right:2984.7px;top:1074.7px;font-size:13.6px;line-height:13.6px;color:#69707d;font-weight:normal;font-family:'Liberation Sans', sans-serif;">0</div>
<div class="t" style="right:2984.7px;top:1029.2px;font-size:13.6px;line-height:13.6px;color:#69707d;font-weight:normal;font-family:'Liberation Sans', sans-serif;">1,000</div>
<div class="t" style="right:2984.7px;top:983.8px;font-size:13.6px;line-height:13.6px;color:#69707d;font-weight:normal;font-family:'Liberation Sans', sans-serif;">2,000</div>
<div class="t" style="right:2984.7px;top:938.3px;font-size:13.6px;line-height:13.6px;color:#69707d;font-weight:normal;font-family:'Liberation Sans', sans-serif;">3,000</div>
<div class="t" style="right:2984.7px;top:892.9px;font-size:13.6px;line-height:13.6px;color:#69707d;font-weight:normal;font-family:'Liberation Sans', sans-serif;">4,000</div>
<div class="t" style="right:2984.7px;top:847.4px;font-size:13.6px;line-height:13.6px;color:#69707d;font-weight:normal;font-family:'Liberation Sans', sans-serif;">5,000</div>
<div class="t" style="right:2984.7px;top:801.9px;font-size:13.6px;line-height:13.6px;color:#69707d;font-weight:normal;font-family:'Liberation Sans', sans-serif;">6,000</div>
<div class="t" style="right:2984.7px;top:756.5px;font-size:13.6px;line-height:13.6px;color:#69707d;font-weight:normal;font-family:'Liberation Sans', sans-serif;">7,000</div>
<div class="t" style="left:-478.7px;width:1200px;text-align:center;top:1093.7px;font-size:13.6px;line-height:13.6px;color:#69707d;font-weight:normal;font-family:'Liberation Sans', sans-serif;">00:00</div>
<div class="t" style="left:-242.1px;width:1200px;text-align:center;top:1093.7px;font-size:13.6px;line-height:13.6px;color:#69707d;font-weight:normal;font-family:'Liberation Sans', sans-serif;">03:00</div>
<div class="t" style="left:-5.5px;width:1200px;text-align:center;top:1093.7px;font-size:13.6px;line-height:13.6px;color:#69707d;font-weight:normal;font-family:'Liberation Sans', sans-serif;">06:00</div>
<div class="t" style="left:231.1px;width:1200px;text-align:center;top:1093.7px;font-size:13.6px;line-height:13.6px;color:#69707d;font-weight:normal;font-family:'Liberation Sans', sans-serif;">09:00</div>
<div class="t" style="left:467.7px;width:1200px;text-align:center;top:1093.7px;font-size:13.6px;line-height:13.6px;color:#69707d;font-weight:normal;font-family:'Liberation Sans', sans-serif;">12:00</div>
<div class="t" style="left:704.4px;width:1200px;text-align:center;top:1093.7px;font-size:13.6px;line-height:13.6px;color:#69707d;font-weight:normal;font-family:'Liberation Sans', sans-serif;">15:00</div>
<div class="t" style="left:941.0px;width:1200px;text-align:center;top:1093.7px;font-size:13.6px;line-height:13.6px;color:#69707d;font-weight:normal;font-family:'Liberation Sans', sans-serif;">18:00</div>
<div class="t" style="left:1177.6px;width:1200px;text-align:center;top:1093.7px;font-size:13.6px;line-height:13.6px;color:#69707d;font-weight:normal;font-family:'Liberation Sans', sans-serif;">21:00</div>
<div class="t" style="left:448.0px;width:1200px;text-align:center;top:1128.2px;font-size:15.6px;line-height:15.6px;color:#343741;font-weight:bold;font-family:'Liberation Sans', sans-serif;">@timestamp per 30 minutes</div>
<div class="t" style="left:-58.2px;top:905.4px;width:200px;text-align:center;transform:rotate(-90deg);font-size:15px;line-height:15px;font-weight:bold;color:#343741">Count of records</div>
<div class="t" style="left:2034.5px;top:747.3px;font-size:15px;line-height:15px;color:#343741;font-weight:normal;font-family:'Liberation Sans', sans-serif;">end</div>
<div class="t" style="left:2034.5px;top:774.8px;font-size:15px;line-height:15px;color:#343741;font-weight:normal;font-family:'Liberation Sans', sans-serif;">fork</div>
<div class="t" style="left:2034.5px;top:802.3px;font-size:15px;line-height:15px;color:#343741;font-weight:normal;font-family:'Liberation Sans', sans-serif;">exec</div>
<div class="t" style="left:2034.5px;top:829.8px;font-size:15px;line-height:15px;color:#343741;font-weight:normal;font-family:'Liberation Sans', sans-serif;">block</div>
<div class="t" style="left:2034.5px;top:857.3px;font-size:15px;line-height:15px;color:#343741;font-weight:normal;font-family:'Liberation Sans', sans-serif;">pass</div>
<svg style="left:2009px;top:743px;" width="90" height="149" viewBox="2009 743 90 149"><circle cx="2019" cy="755.4" r="5" fill="#54b399"/><rect x="2092.1" y="748.3" width="3.2" height="3.2" fill="none" stroke="#343741" stroke-width="1.1"/><rect x="2092.1" y="753.8" width="3.2" height="3.2" fill="none" stroke="#343741" stroke-width="1.1"/><rect x="2092.1" y="759.3" width="3.2" height="3.2" fill="none" stroke="#343741" stroke-width="1.1"/><circle cx="2019" cy="782.9" r="5" fill="#6092c0"/><rect x="2092.1" y="775.8" width="3.2" height="3.2" fill="none" stroke="#343741" stroke-width="1.1"/><rect x="2092.1" y="781.3" width="3.2" height="3.2" fill="none" stroke="#343741" stroke-width="1.1"/><rect x="2092.1" y="786.8" width="3.2" height="3.2" fill="none" stroke="#343741" stroke-width="1.1"/><circle cx="2019" cy="810.4" r="5" fill="#d36086"/><rect x="2092.1" y="803.3" width="3.2" height="3.2" fill="none" stroke="#343741" stroke-width="1.1"/><rect x="2092.1" y="808.8" width="3.2" height="3.2" fill="none" stroke="#343741" stroke-width="1.1"/><rect x="2092.1" y="814.3" width="3.2" height="3.2" fill="none" stroke="#343741" stroke-width="1.1"/><circle cx="2019" cy="837.9" r="5" fill="#9170b8"/><rect x="2092.1" y="830.8" width="3.2" height="3.2" fill="none" stroke="#343741" stroke-width="1.1"/><rect x="2092.1" y="836.3" width="3.2" height="3.2" fill="none" stroke="#343741" stroke-width="1.1"/><rect x="2092.1" y="841.8" width="3.2" height="3.2" fill="none" stroke="#343741" stroke-width="1.1"/><circle cx="2019" cy="865.4" r="5" fill="#ca8eae"/><rect x="2092.1" y="858.3" width="3.2" height="3.2" fill="none" stroke="#343741" stroke-width="1.1"/><rect x="2092.1" y="863.8" width="3.2" height="3.2" fill="none" stroke="#343741" stroke-width="1.1"/><rect x="2092.1" y="869.3" width="3.2" height="3.2" fill="none" stroke="#343741" stroke-width="1.1"/></svg>
<svg style="left:2320px;top:715px;" width="455" height="455" viewBox="2320 715 455 455"><path d="M2546.10 802.10 A139.4 139.4 0 1 1 2431.77 1021.26 L2492.46 978.92 A65.4 65.4 0 1 0 2546.10 876.10 Z" fill="#00a69b" stroke="#fff" stroke-width="1.8" stroke-linejoin="round"/><path d="M2431.77 1021.26 A139.4 139.4 0 0 1 2544.88 802.11 L2545.53 876.10 A65.4 65.4 0 0 0 2492.46 978.92 Z" fill="#5cbf7d" stroke="#fff" stroke-width="1.8" stroke-linejoin="round"/><path d="M2544.88 802.11 A139.4 139.4 0 0 1 2546.08 802.10 L2546.09 876.10 A65.4 65.4 0 0 0 2545.53 876.10 Z" fill="#6f87d8" stroke="#fff" stroke-width="1.8" stroke-linejoin="round"/><path d="M2546.10 728.00 A213.5 213.5 0 1 1 2374.48 1068.49 L2434.04 1024.42 A139.4 139.4 0 1 0 2546.10 802.10 Z" fill="#673cb8" stroke="#fff" stroke-width="1.8" stroke-linejoin="round"/><path d="M2374.48 1068.49 A213.5 213.5 0 0 1 2371.00 1063.65 L2431.77 1021.26 A139.4 139.4 0 0 0 2434.04 1024.42 Z" fill="#c44fc0" stroke="#fff" stroke-width="1.8" stroke-linejoin="round"/><path d="M2371.00 1063.65 A213.5 213.5 0 0 1 2513.81 730.46 L2525.01 803.70 A139.4 139.4 0 0 0 2431.77 1021.26 Z" fill="#673cb8" stroke="#fff" stroke-width="1.8" stroke-linejoin="round"/><path d="M2513.81 730.46 A213.5 213.5 0 0 1 2528.23 728.75 L2534.44 802.59 A139.4 139.4 0 0 0 2525.01 803.70 Z" fill="#9c3131" stroke="#fff" stroke-width="1.8" stroke-linejoin="round"/><path d="M2528.23 728.75 A213.5 213.5 0 0 1 2542.37 728.03 L2543.67 802.12 A139.4 139.4 0 0 0 2534.44 802.59 Z" fill="#c8b03e" stroke="#fff" stroke-width="1.8" stroke-linejoin="round"/><path d="M2542.37 728.03 A213.5 213.5 0 0 1 2544.24 728.01 L2544.88 802.11 A139.4 139.4 0 0 0 2543.67 802.12 Z" fill="#a36ad0" stroke="#fff" stroke-width="1.8" stroke-linejoin="round"/><path d="M2544.24 728.01 A213.5 213.5 0 0 1 2546.06 728.00 L2546.08 802.10 A139.4 139.4 0 0 0 2544.88 802.11 Z" fill="#673cb8" stroke="#fff" stroke-width="1.8" stroke-linejoin="round"/></svg>
<div class="t" style="left:2983.3px;top:735.2px;font-size:15px;line-height:15px;color:#343741;font-weight:normal;font-family:'Liberation Sans', sans-serif;">block</div>
<div class="t" style="left:2983.3px;top:762.7px;font-size:15px;line-height:15px;color:#343741;font-weight:normal;font-family:'Liberation Sans', sans-serif;">pass</div>
<div class="t" style="left:2983.3px;top:790.2px;font-size:15px;line-height:15px;color:#343741;font-weight:normal;font-family:'Liberation Sans', sans-serif;">rdr</div>
<svg style="left:2957px;top:731px;" width="107" height="94" viewBox="2957 731 107 94"><circle cx="2967.8" cy="743.3" r="5" fill="#00a69b"/><rect x="3056.9" y="736.2" width="3.2" height="3.2" fill="none" stroke="#343741" stroke-width="1.1"/><rect x="3056.9" y="741.7" width="3.2" height="3.2" fill="none" stroke="#343741" stroke-width="1.1"/><rect x="3056.9" y="747.2" width="3.2" height="3.2" fill="none" stroke="#343741" stroke-width="1.1"/><circle cx="2967.8" cy="770.8" r="5" fill="#5cbf7d"/><rect x="3056.9" y="763.7" width="3.2" height="3.2" fill="none" stroke="#343741" stroke-width="1.1"/><rect x="3056.9" y="769.2" width="3.2" height="3.2" fill="none" stroke="#343741" stroke-width="1.1"/><rect x="3056.9" y="774.7" width="3.2" height="3.2" fill="none" stroke="#343741" stroke-width="1.1"/><circle cx="2967.8" cy="798.3" r="5" fill="#6f87d8"/><rect x="3056.9" y="791.2" width="3.2" height="3.2" fill="none" stroke="#343741" stroke-width="1.1"/><rect x="3056.9" y="796.7" width="3.2" height="3.2" fill="none" stroke="#343741" stroke-width="1.1"/><rect x="3056.9" y="802.2" width="3.2" height="3.2" fill="none" stroke="#343741" stroke-width="1.1"/></svg>
<svg style="left:2300px;top:1200px;" width="500" height="500" viewBox="2300 1200 500 500"><path d="M2546.10 1218.10 A230.9 230.9 0 1 1 2359.54 1585.05 L2489.54 1490.24 A70 70 0 1 0 2546.10 1379.00 Z" fill="#00a69b" stroke="#fff" stroke-width="1.8" stroke-linejoin="round"/><path d="M2359.54 1585.05 A230.9 230.9 0 0 1 2393.40 1275.80 L2499.81 1396.49 A70 70 0 0 0 2489.54 1490.24 Z" fill="#5cbf7d" stroke="#fff" stroke-width="1.8" stroke-linejoin="round"/><path d="M2393.40 1275.80 A230.9 230.9 0 0 1 2507.20 1221.40 L2534.31 1380.00 A70 70 0 0 0 2499.81 1396.49 Z" fill="#6f87d8" stroke="#fff" stroke-width="1.8" stroke-linejoin="round"/><path d="M2507.20 1221.40 A230.9 230.9 0 0 1 2544.49 1218.11 L2545.61 1379.00 A70 70 0 0 0 2534.31 1380.00 Z" fill="#673cb8" stroke="#fff" stroke-width="1.8" stroke-linejoin="round"/><path d="M2544.49 1218.11 A230.9 230.9 0 0 1 2546.06 1218.10 L2546.09 1379.00 A70 70 0 0 0 2545.61 1379.00 Z" fill="#c44fc0" stroke="#fff" stroke-width="1.8" stroke-linejoin="round"/></svg>
<div class="t" style="left:2984.5px;top:1224.4px;font-size:15px;line-height:15px;color:#343741;font-weight:normal;font-family:'Liberation Sans', sans-serif;">udp</div>
<div class="t" style="left:2984.5px;top:1251.9px;font-size:15px;line-height:15px;color:#343741;font-weight:normal;font-family:'Liberation Sans', sans-serif;">igmp</div>
<div class="t" style="left:2984.5px;top:1279.4px;font-size:15px;line-height:15px;color:#343741;font-weight:normal;font-family:'Liberation Sans', sans-serif;">tcp</div>
<div class="t" style="left:2984.5px;top:1306.9px;font-size:15px;line-height:15px;color:#343741;font-weight:normal;font-family:'Liberation Sans', sans-serif;">icmp</div>
<div class="t" style="left:2984.5px;top:1334.4px;font-size:15px;line-height:15px;color:#343741;font-weight:normal;font-family:'Liberation Sans', sans-serif;">ip</div>
<svg style="left:2959px;top:1220px;" width="105" height="150" viewBox="2959 1220 105 150"><circle cx="2969" cy="1232.5" r="5" fill="#00a69b"/><rect x="3056.9" y="1225.4" width="3.2" height="3.2" fill="none" stroke="#343741" stroke-width="1.1"/><rect x="3056.9" y="1230.9" width="3.2" height="3.2" fill="none" stroke="#343741" stroke-width="1.1"/><rect x="3056.9" y="1236.4" width="3.2" height="3.2" fill="none" stroke="#343741" stroke-width="1.1"/><circle cx="2969" cy="1260.0" r="5" fill="#5cbf7d"/><rect x="3056.9" y="1252.9" width="3.2" height="3.2" fill="none" stroke="#343741" stroke-width="1.1"/><rect x="3056.9" y="1258.4" width="3.2" height="3.2" fill="none" stroke="#343741" stroke-width="1.1"/><rect x="3056.9" y="1263.9" width="3.2" height="3.2" fill="none" stroke="#343741" stroke-width="1.1"/><circle cx="2969" cy="1287.5" r="5" fill="#6f87d8"/><rect x="3056.9" y="1280.4" width="3.2" height="3.2" fill="none" stroke="#343741" stroke-width="1.1"/><rect x="3056.9" y="1285.9" width="3.2" height="3.2" fill="none" stroke="#343741" stroke-width="1.1"/><rect x="3056.9" y="1291.4" width="3.2" height="3.2" fill="none" stroke="#343741" stroke-width="1.1"/><circle cx="2969" cy="1315.0" r="5" fill="#673cb8"/><rect x="3056.9" y="1307.9" width="3.2" height="3.2" fill="none" stroke="#343741" stroke-width="1.1"/><rect x="3056.9" y="1313.4" width="3.2" height="3.2" fill="none" stroke="#343741" stroke-width="1.1"/><rect x="3056.9" y="1318.9" width="3.2" height="3.2" fill="none" stroke="#343741" stroke-width="1.1"/><circle cx="2969" cy="1342.5" r="5" fill="#c44fc0"/><rect x="3056.9" y="1335.4" width="3.2" height="3.2" fill="none" stroke="#343741" stroke-width="1.1"/><rect x="3056.9" y="1340.9" width="3.2" height="3.2" fill="none" stroke="#343741" stroke-width="1.1"/><rect x="3056.9" y="1346.4" width="3.2" height="3.2" fill="none" stroke="#343741" stroke-width="1.1"/></svg>
<div class="r" style="left:2134.3px;top:1132.0px;width:29.5px;height:29.5px;background:#f1f4fa;border-radius:5px;"></div>
<svg style="left:2134px;top:1132px;" width="30" height="30" viewBox="2134 1132 30 30"><path d="M2141.3 1141.4 H2143.9 M2146.3 1141.4 H2156.5" stroke="#5a606d" stroke-width="1.3" stroke-linecap="round"/><path d="M2141.3 1145.1 H2143.9 M2146.3 1145.1 H2156.5" stroke="#5a606d" stroke-width="1.3" stroke-linecap="round"/><path d="M2141.3 1148.8 H2143.9 M2146.3 1148.8 H2156.5" stroke="#5a606d" stroke-width="1.3" stroke-linecap="round"/><path d="M2141.3 1152.5 H2143.9 M2146.3 1152.5 H2156.5" stroke="#5a606d" stroke-width="1.3" stroke-linecap="round"/></svg>
<div class="r" style="left:2134.3px;top:1657.4px;width:29.5px;height:29.5px;background:#f1f4fa;border-radius:5px;"></div>
<svg style="left:2134px;top:1657px;" width="30" height="30" viewBox="2134 1657 30 30"><path d="M2141.3 1666.8 H2143.9 M2146.3 1666.8 H2156.5" stroke="#5a606d" stroke-width="1.3" stroke-linecap="round"/><path d="M2141.3 1670.5 H2143.9 M2146.3 1670.5 H2156.5" stroke="#5a606d" stroke-width="1.3" stroke-linecap="round"/><path d="M2141.3 1674.2 H2143.9 M2146.3 1674.2 H2156.5" stroke="#5a606d" stroke-width="1.3" stroke-linecap="round"/><path d="M2141.3 1677.9 H2143.9 M2146.3 1677.9 H2156.5" stroke="#5a606d" stroke-width="1.3" stroke-linecap="round"/></svg>
<div class="r" style="left:18.6px;top:1657.0px;width:29.5px;height:29.5px;background:#f1f4fa;border-radius:5px;"></div>
<svg style="left:18px;top:1657px;" width="30" height="30" viewBox="18 1657 30 30"><path d="M25.6 1666.4 H28.200000000000003 M30.6 1666.4 H40.8" stroke="#5a606d" stroke-width="1.3" stroke-linecap="round"/><path d="M25.6 1670.1 H28.200000000000003 M30.6 1670.1 H40.8" stroke="#5a606d" stroke-width="1.3" stroke-linecap="round"/><path d="M25.6 1673.8 H28.200000000000003 M30.6 1673.8 H40.8" stroke="#5a606d" stroke-width="1.3" stroke-linecap="round"/><path d="M25.6 1677.5 H28.200000000000003 M30.6 1677.5 H40.8" stroke="#5a606d" stroke-width="1.3" stroke-linecap="round"/></svg>
<svg style="left:100px;top:1200px;" width="1900" height="410" viewBox="100 1200 1900 410"><path d="M111.6 1213 V1604.4" stroke="#eceef2" stroke-width="1.5"/><path d="M111.6 1604.4 H1997" stroke="#eceef2" stroke-width="1.5"/><rect x="113.1" y="1559.7" width="36.8" height="44.7" fill="#00a69b"/><rect x="113.1" y="1529.7" width="36.8" height="30.0" fill="#5cbf7d"/><rect x="113.1" y="1526.3" width="36.8" height="3.4" fill="#6f87d8"/><rect x="113.1" y="1523.5" width="36.8" height="2.8" fill="#673cb8"/><rect x="152.4" y="1543.5" width="36.8" height="60.9" fill="#00a69b"/><rect x="152.4" y="1513.2" width="36.8" height="30.3" fill="#5cbf7d"/><rect x="152.4" y="1509.7" width="36.8" height="3.5" fill="#6f87d8"/><rect x="152.4" y="1507.4" width="36.8" height="2.4" fill="#673cb8"/><rect x="191.7" y="1568.0" width="36.8" height="36.4" fill="#00a69b"/><rect x="191.7" y="1537.0" width="36.8" height="31.0" fill="#5cbf7d"/><rect x="191.7" y="1533.7" width="36.8" height="3.3" fill="#6f87d8"/><rect x="191.7" y="1531.1" width="36.8" height="2.6" fill="#673cb8"/><rect x="231.0" y="1547.0" width="36.8" height="57.4" fill="#00a69b"/><rect x="231.0" y="1517.0" width="36.8" height="30.0" fill="#5cbf7d"/><rect x="231.0" y="1513.2" width="36.8" height="3.8" fill="#6f87d8"/><rect x="231.0" y="1510.8" width="36.8" height="2.4" fill="#673cb8"/><rect x="270.3" y="1573.8" width="36.8" height="30.6" fill="#00a69b"/><rect x="270.3" y="1544.2" width="36.8" height="29.6" fill="#5cbf7d"/><rect x="270.3" y="1540.9" width="36.8" height="3.3" fill="#6f87d8"/><rect x="270.3" y="1538.3" width="36.8" height="2.6" fill="#673cb8"/><rect x="309.6" y="1565.5" width="36.8" height="38.9" fill="#00a69b"/><rect x="309.6" y="1534.9" width="36.8" height="30.6" fill="#5cbf7d"/><rect x="309.6" y="1531.4" width="36.8" height="3.5" fill="#6f87d8"/><rect x="309.6" y="1528.7" width="36.8" height="2.7" fill="#673cb8"/><rect x="348.9" y="1550.7" width="36.8" height="53.7" fill="#00a69b"/><rect x="348.9" y="1520.1" width="36.8" height="30.6" fill="#5cbf7d"/><rect x="348.9" y="1516.7" width="36.8" height="3.4" fill="#6f87d8"/><rect x="348.9" y="1513.9" width="36.8" height="2.8" fill="#673cb8"/><rect x="388.2" y="1560.0" width="36.8" height="44.4" fill="#00a69b"/><rect x="388.2" y="1529.7" width="36.8" height="30.3" fill="#5cbf7d"/><rect x="388.2" y="1526.3" width="36.8" height="3.4" fill="#6f87d8"/><rect x="388.2" y="1523.5" width="36.8" height="2.8" fill="#673cb8"/><rect x="427.5" y="1548.0" width="36.8" height="56.4" fill="#00a69b"/><rect x="427.5" y="1517.0" width="36.8" height="31.0" fill="#5cbf7d"/><rect x="427.5" y="1513.8" width="36.8" height="3.2" fill="#6f87d8"/><rect x="427.5" y="1511.1" width="36.8" height="2.7" fill="#673cb8"/><rect x="466.8" y="1540.8" width="36.8" height="63.6" fill="#00a69b"/><rect x="466.8" y="1510.5" width="36.8" height="30.3" fill="#5cbf7d"/><rect x="466.8" y="1506.9" width="36.8" height="3.6" fill="#6f87d8"/><rect x="466.8" y="1504.3" width="36.8" height="2.5" fill="#673cb8"/><rect x="506.1" y="1551.4" width="36.8" height="53.0" fill="#00a69b"/><rect x="506.1" y="1521.1" width="36.8" height="30.3" fill="#5cbf7d"/><rect x="506.1" y="1517.8" width="36.8" height="3.3" fill="#6f87d8"/><rect x="506.1" y="1515.2" width="36.8" height="2.6" fill="#673cb8"/><rect x="545.4" y="1554.5" width="36.8" height="49.9" fill="#00a69b"/><rect x="545.4" y="1523.9" width="36.8" height="30.6" fill="#5cbf7d"/><rect x="545.4" y="1520.4" width="36.8" height="3.5" fill="#6f87d8"/><rect x="545.4" y="1517.9" width="36.8" height="2.5" fill="#673cb8"/><rect x="584.7" y="1545.7" width="36.8" height="58.7" fill="#00a69b"/><rect x="584.7" y="1515.8" width="36.8" height="29.9" fill="#5cbf7d"/><rect x="584.7" y="1512.0" width="36.8" height="3.8" fill="#6f87d8"/><rect x="584.7" y="1509.3" width="36.8" height="2.8" fill="#673cb8"/><rect x="624.0" y="1546.1" width="36.8" height="58.3" fill="#00a69b"/><rect x="624.0" y="1516.2" width="36.8" height="29.9" fill="#5cbf7d"/><rect x="624.0" y="1512.6" width="36.8" height="3.6" fill="#6f87d8"/><rect x="624.0" y="1510.0" width="36.8" height="2.7" fill="#673cb8"/><rect x="663.3" y="1550.5" width="36.8" height="53.9" fill="#00a69b"/><rect x="663.3" y="1520.0" width="36.8" height="30.5" fill="#5cbf7d"/><rect x="663.3" y="1516.4" width="36.8" height="3.6" fill="#6f87d8"/><rect x="663.3" y="1513.8" width="36.8" height="2.6" fill="#673cb8"/><rect x="702.6" y="1476.3" width="36.8" height="128.1" fill="#00a69b"/><rect x="702.6" y="1445.3" width="36.8" height="31.1" fill="#5cbf7d"/><rect x="702.6" y="1441.2" width="36.8" height="4.1" fill="#6f87d8"/><rect x="702.6" y="1428.8" width="36.8" height="12.4" fill="#673cb8"/><rect x="741.9" y="1499.3" width="36.8" height="105.1" fill="#00a69b"/><rect x="741.9" y="1483.1" width="36.8" height="16.2" fill="#5cbf7d"/><rect x="741.9" y="1479.0" width="36.8" height="4.0" fill="#6f87d8"/><rect x="741.9" y="1419.8" width="36.8" height="59.2" fill="#673cb8"/><rect x="781.2" y="1472.7" width="36.8" height="131.7" fill="#00a69b"/><rect x="781.2" y="1471.8" width="36.8" height="1.0" fill="#5cbf7d"/><rect x="781.2" y="1464.2" width="36.8" height="7.6" fill="#6f87d8"/><rect x="781.2" y="1445.3" width="36.8" height="18.9" fill="#673cb8"/><rect x="820.5" y="1503.8" width="36.8" height="100.6" fill="#00a69b"/><rect x="820.5" y="1458.4" width="36.8" height="45.4" fill="#5cbf7d"/><rect x="820.5" y="1454.6" width="36.8" height="3.8" fill="#6f87d8"/><rect x="820.5" y="1448.0" width="36.8" height="6.6" fill="#673cb8"/><rect x="859.8" y="1474.5" width="36.8" height="129.9" fill="#00a69b"/><rect x="859.8" y="1429.8" width="36.8" height="44.7" fill="#5cbf7d"/><rect x="859.8" y="1425.8" width="36.8" height="4.0" fill="#6f87d8"/><rect x="859.8" y="1401.2" width="36.8" height="24.6" fill="#673cb8"/><rect x="899.1" y="1467.0" width="36.8" height="137.4" fill="#00a69b"/><rect x="899.1" y="1421.2" width="36.8" height="45.8" fill="#5cbf7d"/><rect x="899.1" y="1417.2" width="36.8" height="4.0" fill="#6f87d8"/><rect x="899.1" y="1385.0" width="36.8" height="32.2" fill="#673cb8"/><rect x="938.4" y="1485.9" width="36.8" height="118.5" fill="#00a69b"/><rect x="938.4" y="1440.8" width="36.8" height="45.1" fill="#5cbf7d"/><rect x="938.4" y="1437.0" width="36.8" height="3.8" fill="#6f87d8"/><rect x="938.4" y="1289.0" width="36.8" height="148.0" fill="#673cb8"/><rect x="977.7" y="1456.6" width="36.8" height="147.8" fill="#00a69b"/><rect x="977.7" y="1410.9" width="36.8" height="45.7" fill="#5cbf7d"/><rect x="977.7" y="1406.7" width="36.8" height="4.2" fill="#6f87d8"/><rect x="977.7" y="1399.9" width="36.8" height="6.8" fill="#673cb8"/><rect x="1017.0" y="1453.9" width="36.8" height="150.5" fill="#00a69b"/><rect x="1017.0" y="1408.5" width="36.8" height="45.4" fill="#5cbf7d"/><rect x="1017.0" y="1404.7" width="36.8" height="3.8" fill="#6f87d8"/><rect x="1017.0" y="1401.6" width="36.8" height="3.1" fill="#673cb8"/><rect x="1056.3" y="1490.7" width="36.8" height="113.7" fill="#00a69b"/><rect x="1056.3" y="1445.3" width="36.8" height="45.4" fill="#5cbf7d"/><rect x="1056.3" y="1441.7" width="36.8" height="3.5" fill="#6f87d8"/><rect x="1056.3" y="1439.4" width="36.8" height="2.4" fill="#673cb8"/><rect x="1095.6" y="1524.8" width="36.8" height="79.6" fill="#00a69b"/><rect x="1095.6" y="1479.0" width="36.8" height="45.8" fill="#5cbf7d"/><rect x="1095.6" y="1475.6" width="36.8" height="3.5" fill="#6f87d8"/><rect x="1095.6" y="1472.7" width="36.8" height="2.8" fill="#673cb8"/><rect x="1134.9" y="1544.4" width="36.8" height="60.0" fill="#00a69b"/><rect x="1134.9" y="1508.3" width="36.8" height="36.1" fill="#5cbf7d"/><rect x="1134.9" y="1504.8" width="36.8" height="3.5" fill="#6f87d8"/><rect x="1134.9" y="1502.1" width="36.8" height="2.7" fill="#673cb8"/><rect x="1174.2" y="1537.2" width="36.8" height="67.2" fill="#00a69b"/><rect x="1174.2" y="1499.6" width="36.8" height="37.6" fill="#5cbf7d"/><rect x="1174.2" y="1496.2" width="36.8" height="3.5" fill="#6f87d8"/><rect x="1174.2" y="1493.5" width="36.8" height="2.7" fill="#673cb8"/><rect x="1213.5" y="1559.9" width="36.8" height="44.5" fill="#00a69b"/><rect x="1213.5" y="1529.6" width="36.8" height="30.3" fill="#5cbf7d"/><rect x="1213.5" y="1526.1" width="36.8" height="3.5" fill="#6f87d8"/><rect x="1213.5" y="1523.4" width="36.8" height="2.7" fill="#673cb8"/><rect x="1252.8" y="1460.0" width="36.8" height="144.4" fill="#00a69b"/><rect x="1252.8" y="1418.4" width="36.8" height="41.6" fill="#5cbf7d"/><rect x="1252.8" y="1414.4" width="36.8" height="4.0" fill="#6f87d8"/><rect x="1252.8" y="1406.7" width="36.8" height="7.7" fill="#673cb8"/><rect x="1292.1" y="1382.7" width="36.8" height="221.7" fill="#00a69b"/><rect x="1292.1" y="1344.8" width="36.8" height="37.9" fill="#5cbf7d"/><rect x="1292.1" y="1340.7" width="36.8" height="4.1" fill="#6f87d8"/><rect x="1292.1" y="1325.5" width="36.8" height="15.2" fill="#673cb8"/><rect x="1292.1" y="1323.1" width="36.8" height="2.4" fill="#c44fc0"/><rect x="1331.4" y="1297.3" width="36.8" height="307.1" fill="#00a69b"/><rect x="1331.4" y="1262.9" width="36.8" height="34.4" fill="#5cbf7d"/><rect x="1331.4" y="1258.5" width="36.8" height="4.4" fill="#6f87d8"/><rect x="1331.4" y="1213.0" width="36.8" height="45.5" fill="#673cb8"/><rect x="1370.7" y="1565.7" width="36.8" height="38.7" fill="#00a69b"/><rect x="1370.7" y="1557.1" width="36.8" height="8.6" fill="#5cbf7d"/><rect x="1370.7" y="1556.0" width="36.8" height="1.1" fill="#6f87d8"/><rect x="1370.7" y="1548.5" width="36.8" height="7.5" fill="#673cb8"/></svg>
<div class="t" style="right:2995.2px;top:1597.6px;font-size:13.6px;line-height:13.6px;color:#69707d;font-weight:normal;font-family:'Liberation Sans', sans-serif;">0</div>
<div class="t" style="right:2995.2px;top:1568.7px;font-size:13.6px;line-height:13.6px;color:#69707d;font-weight:normal;font-family:'Liberation Sans', sans-serif;">500</div>
<div class="t" style="right:2995.2px;top:1539.9px;font-size:13.6px;line-height:13.6px;color:#69707d;font-weight:normal;font-family:'Liberation Sans', sans-serif;">1,000</div>
<div class="t" style="right:2995.2px;top:1511.0px;font-size:13.6px;line-height:13.6px;color:#69707d;font-weight:normal;font-family:'Liberation Sans', sans-serif;">1,500</div>
<div class="t" style="right:2995.2px;top:1482.1px;font-size:13.6px;line-height:13.6px;color:#69707d;font-weight:normal;font-family:'Liberation Sans', sans-serif;">2,000</div>
<div class="t" style="right:2995.2px;top:1453.3px;font-size:13.6px;line-height:13.6px;color:#69707d;font-weight:normal;font-family:'Liberation Sans', sans-serif;">2,500</div>
<div class="t" style="right:2995.2px;top:1424.4px;font-size:13.6px;line-height:13.6px;color:#69707d;font-weight:normal;font-family:'Liberation Sans', sans-serif;">3,000</div>
<div class="t" style="right:2995.2px;top:1395.6px;font-size:13.6px;line-height:13.6px;color:#69707d;font-weight:normal;font-family:'Liberation Sans', sans-serif;">3,500</div>
<div class="t" style="right:2995.2px;top:1366.7px;font-size:13.6px;line-height:13.6px;color:#69707d;font-weight:normal;font-family:'Liberation Sans', sans-serif;">4,000</div>
<div class="t" style="right:2995.2px;top:1337.8px;font-size:13.6px;line-height:13.6px;color:#69707d;font-weight:normal;font-family:'Liberation Sans', sans-serif;">4,500</div>
<div class="t" style="right:2995.2px;top:1309.0px;font-size:13.6px;line-height:13.6px;color:#69707d;font-weight:normal;font-family:'Liberation Sans', sans-serif;">5,000</div>
<div class="t" style="right:2995.2px;top:1280.1px;font-size:13.6px;line-height:13.6px;color:#69707d;font-weight:normal;font-family:'Liberation Sans', sans-serif;">5,500</div>
<div class="t" style="right:2995.2px;top:1251.3px;font-size:13.6px;line-height:13.6px;color:#69707d;font-weight:normal;font-family:'Liberation Sans', sans-serif;">6,000</div>
<div class="t" style="right:2995.2px;top:1222.4px;font-size:13.6px;line-height:13.6px;color:#69707d;font-weight:normal;font-family:'Liberation Sans', sans-serif;">6,500</div>
<div class="t" style="left:-488.4px;width:1200px;text-align:center;top:1616.6px;font-size:13.6px;line-height:13.6px;color:#69707d;font-weight:normal;font-family:'Liberation Sans', sans-serif;">00:00</div>
<div class="t" style="left:-252.6px;width:1200px;text-align:center;top:1616.6px;font-size:13.6px;line-height:13.6px;color:#69707d;font-weight:normal;font-family:'Liberation Sans', sans-serif;">03:00</div>
<div class="t" style="left:-16.8px;width:1200px;text-align:center;top:1616.6px;font-size:13.6px;line-height:13.6px;color:#69707d;font-weight:normal;font-family:'Liberation Sans', sans-serif;">06:00</div>
<div class="t" style="left:219.0px;width:1200px;text-align:center;top:1616.6px;font-size:13.6px;line-height:13.6px;color:#69707d;font-weight:normal;font-family:'Liberation Sans', sans-serif;">09:00</div>
<div class="t" style="left:454.8px;width:1200px;text-align:center;top:1616.6px;font-size:13.6px;line-height:13.6px;color:#69707d;font-weight:normal;font-family:'Liberation Sans', sans-serif;">12:00</div>
<div class="t" style="left:690.6px;width:1200px;text-align:center;top:1616.6px;font-size:13.6px;line-height:13.6px;color:#69707d;font-weight:normal;font-family:'Liberation Sans', sans-serif;">15:00</div>
<div class="t" style="left:926.4px;width:1200px;text-align:center;top:1616.6px;font-size:13.6px;line-height:13.6px;color:#69707d;font-weight:normal;font-family:'Liberation Sans', sans-serif;">18:00</div>
<div class="t" style="left:1162.2px;width:1200px;text-align:center;top:1616.6px;font-size:13.6px;line-height:13.6px;color:#69707d;font-weight:normal;font-family:'Liberation Sans', sans-serif;">21:00</div>
<div class="t" style="left:454.9px;width:1200px;text-align:center;top:1651.3px;font-size:15.6px;line-height:15.6px;color:#343741;font-weight:bold;font-family:'Liberation Sans', sans-serif;">Firewall - Network Transport/Time</div>
<div class="t" style="left:-67.6px;top:1401.1px;width:200px;text-align:center;transform:rotate(-90deg);font-size:15.2px;line-height:15px;font-weight:bold;color:#343741">Count</div>
<div class="t" style="left:2046.0px;top:1214.6px;font-size:15px;line-height:15px;color:#343741;font-weight:normal;font-family:'Liberation Sans', sans-serif;">ip</div>
<div class="t" style="left:2046.0px;top:1242.1px;font-size:15px;line-height:15px;color:#343741;font-weight:normal;font-family:'Liberation Sans', sans-serif;">tcp</div>
<div class="t" style="left:2046.0px;top:1269.6px;font-size:15px;line-height:15px;color:#343741;font-weight:normal;font-family:'Liberation Sans', sans-serif;">icmp</div>
<div class="t" style="left:2046.0px;top:1297.1px;font-size:15px;line-height:15px;color:#343741;font-weight:normal;font-family:'Liberation Sans', sans-serif;">igmp</div>
<div class="t" style="left:2046.0px;top:1324.6px;font-size:15px;line-height:15px;color:#343741;font-weight:normal;font-family:'Liberation Sans', sans-serif;">udp</div>
<svg style="left:2020px;top:1210px;" width="92" height="150" viewBox="2020 1210 92 150"><circle cx="2030.9" cy="1222.7" r="5" fill="#c44fc0"/><rect x="2105.0" y="1215.6" width="3.2" height="3.2" fill="none" stroke="#343741" stroke-width="1.1"/><rect x="2105.0" y="1221.1" width="3.2" height="3.2" fill="none" stroke="#343741" stroke-width="1.1"/><rect x="2105.0" y="1226.6" width="3.2" height="3.2" fill="none" stroke="#343741" stroke-width="1.1"/><circle cx="2030.9" cy="1250.2" r="5" fill="#673cb8"/><rect x="2105.0" y="1243.1" width="3.2" height="3.2" fill="none" stroke="#343741" stroke-width="1.1"/><rect x="2105.0" y="1248.6" width="3.2" height="3.2" fill="none" stroke="#343741" stroke-width="1.1"/><rect x="2105.0" y="1254.1" width="3.2" height="3.2" fill="none" stroke="#343741" stroke-width="1.1"/><circle cx="2030.9" cy="1277.7" r="5" fill="#6f87d8"/><rect x="2105.0" y="1270.6" width="3.2" height="3.2" fill="none" stroke="#343741" stroke-width="1.1"/><rect x="2105.0" y="1276.1" width="3.2" height="3.2" fill="none" stroke="#343741" stroke-width="1.1"/><rect x="2105.0" y="1281.6" width="3.2" height="3.2" fill="none" stroke="#343741" stroke-width="1.1"/><circle cx="2030.9" cy="1305.2" r="5" fill="#5cbf7d"/><rect x="2105.0" y="1298.1" width="3.2" height="3.2" fill="none" stroke="#343741" stroke-width="1.1"/><rect x="2105.0" y="1303.6" width="3.2" height="3.2" fill="none" stroke="#343741" stroke-width="1.1"/><rect x="2105.0" y="1309.1" width="3.2" height="3.2" fill="none" stroke="#343741" stroke-width="1.1"/><circle cx="2030.9" cy="1332.7" r="5" fill="#00a69b"/><rect x="2105.0" y="1325.6" width="3.2" height="3.2" fill="none" stroke="#343741" stroke-width="1.1"/><rect x="2105.0" y="1331.1" width="3.2" height="3.2" fill="none" stroke="#343741" stroke-width="1.1"/><rect x="2105.0" y="1336.6" width="3.2" height="3.2" fill="none" stroke="#343741" stroke-width="1.1"/></svg>
<div class="t" style="right:16.5px;top:1736.1px;font-size:18.8px;line-height:18.8px;color:#343741;font-weight:normal;font-family:'Liberation Sans', sans-serif;"><b style="font-size:20.3px">79920</b> documents</div>
<div class="t" style="left:58.7px;top:1776.3px;font-size:15.4px;line-height:15.4px;color:#343741;font-weight:bold;font-family:'Liberation Sans', sans-serif;">Time</div>
<div class="t" style="left:321.5px;top:1776.3px;font-size:15.4px;line-height:15.4px;color:#343741;font-weight:bold;font-family:'Liberation Sans', sans-serif;">observer.name</div>
<div class="t" style="left:651.9px;top:1776.3px;font-size:15.4px;line-height:15.4px;color:#343741;font-weight:bold;font-family:'Liberation Sans', sans-serif;">observer.ingress.vlan.id</div>
<div class="t" style="left:1094.3px;top:1776.3px;font-size:15.4px;line-height:15.4px;color:#343741;font-weight:bold;font-family:'Liberation Sans', sans-serif;">source.ip</div>
<div class="t" style="left:1356.6px;top:1776.3px;font-size:15.4px;line-height:15.4px;color:#343741;font-weight:bold;font-family:'Liberation Sans', sans-serif;">source.port</div>
<div class="t" style="left:1647.2px;top:1776.3px;font-size:15.4px;line-height:15.4px;color:#343741;font-weight:bold;font-family:'Liberation Sans', sans-serif;">destination.ip</div>
<div class="t" style="left:1964.2px;top:1776.3px;font-size:15.4px;line-height:15.4px;color:#343741;font-weight:bold;font-family:'Liberation Sans', sans-serif;">destination.port</div>
<div class="t" style="left:2309.3px;top:1776.3px;font-size:15.4px;line-height:15.4px;color:#343741;font-weight:bold;font-family:'Liberation Sans', sans-serif;">rule.id</div>
<div class="t" style="left:2819.0px;top:1776.3px;font-size:15.4px;line-height:15.4px;color:#343741;font-weight:bold;font-family:'Liberation Sans', sans-serif;">event.action</div>
<svg style="left:96px;top:1776px;" width="16" height="18" viewBox="96 1776 16 18"><path d="M103.8 1780.5 V1791.5 M99.5 1787.2 L103.8 1791.5 L108.1 1787.2" fill="none" stroke="#0b64dd" stroke-width="1.3"/></svg>
<div class="r" style="left:13.0px;top:1804.8px;width:3068.0px;height:1.0px;background:#d3dae6;"></div>
<div class="r" style="left:13.0px;top:1850.8px;width:3068.0px;height:1.0px;background:#d3dae6;"></div>
<div class="r" style="left:13.0px;top:1896.8px;width:3068.0px;height:1.0px;background:#d3dae6;"></div>
<div class="r" style="left:13.0px;top:1942.8px;width:3068.0px;height:1.0px;background:#d3dae6;"></div>
<div class="r" style="left:13.0px;top:1988.7px;width:3068.0px;height:1.0px;background:#d3dae6;"></div>
<svg style="left:20px;top:1816px;" width="20" height="20" viewBox="20 1816 20 20"><path d="M27.6 1821.9 L32.6 1826.9 L27.6 1831.9" fill="none" stroke="#343741" stroke-width="1.3"/></svg>
<div class="t" style="left:58.7px;top:1819.8px;font-size:16px;line-height:16px;color:#343741;font-weight:normal;font-family:'Liberation Mono', monospace;letter-spacing:-0.6px;">Dec 19, 2022 @ 16:08:08.000</div>
<div class="t" style="left:321.5px;top:1819.8px;font-size:16px;line-height:16px;color:#343741;font-weight:normal;font-family:'Liberation Mono', monospace;letter-spacing:-0.6px;">firewall.kali.purple</div>
<div class="t" style="left:661.5px;top:1819.8px;font-size:16px;line-height:16px;color:#343741;font-weight:normal;font-family:'Liberation Mono', monospace;letter-spacing:-0.6px;">-</div>
<div class="t" style="left:1094.3px;top:1819.8px;font-size:16px;line-height:16px;color:#343741;font-weight:normal;font-family:'Liberation Mono', monospace;letter-spacing:-0.6px;">192.168.254.200</div>
<div class="t" style="left:1356.6px;top:1819.8px;font-size:16px;line-height:16px;color:#343741;font-weight:normal;font-family:'Liberation Mono', monospace;letter-spacing:-0.6px;">&nbsp;-</div>
<div class="t" style="left:1647.2px;top:1819.8px;font-size:16px;line-height:16px;color:#343741;font-weight:normal;font-family:'Liberation Mono', monospace;letter-spacing:-0.6px;">224.0.0.22</div>
<div class="t" style="left:1964.2px;top:1819.8px;font-size:16px;line-height:16px;color:#343741;font-weight:normal;font-family:'Liberation Mono', monospace;letter-spacing:-0.6px;">&nbsp;-</div>
<div class="t" style="left:2309.3px;top:1819.8px;font-size:16px;line-height:16px;color:#343741;font-weight:normal;font-family:'Liberation Mono', monospace;letter-spacing:-0.6px;">02f4bab031b57d1e30553ce08e0ec131</div>
<div class="t" style="left:2819.0px;top:1819.8px;font-size:16px;line-height:16px;color:#343741;font-weight:normal;font-family:'Liberation Mono', monospace;letter-spacing:-0.6px;">block</div>
<svg style="left:20px;top:1863px;" width="20" height="20" viewBox="20 1863 20 20"><path d="M27.6 1868.1 L32.6 1873.1 L27.6 1878.1" fill="none" stroke="#343741" stroke-width="1.3"/></svg>
<div class="t" style="left:58.7px;top:1866.0px;font-size:16px;line-height:16px;color:#343741;font-weight:normal;font-family:'Liberation Mono', monospace;letter-spacing:-0.6px;">Dec 19, 2022 @ 16:08:07.000</div>
<div class="t" style="left:321.5px;top:1866.0px;font-size:16px;line-height:16px;color:#343741;font-weight:normal;font-family:'Liberation Mono', monospace;letter-spacing:-0.6px;">firewall.kali.purple</div>
<div class="t" style="left:661.5px;top:1866.0px;font-size:16px;line-height:16px;color:#343741;font-weight:normal;font-family:'Liberation Mono', monospace;letter-spacing:-0.6px;">-</div>
<div class="t" style="left:1094.3px;top:1866.0px;font-size:16px;line-height:16px;color:#343741;font-weight:normal;font-family:'Liberation Mono', monospace;letter-spacing:-0.6px;">192.168.1.10</div>
<div class="t" style="left:1356.6px;top:1866.0px;font-size:16px;line-height:16px;color:#343741;font-weight:normal;font-family:'Liberation Mono', monospace;letter-spacing:-0.6px;">5353</div>
<div class="t" style="left:1647.2px;top:1866.0px;font-size:16px;line-height:16px;color:#343741;font-weight:normal;font-family:'Liberation Mono', monospace;letter-spacing:-0.6px;">224.0.0.251</div>
<div class="t" style="left:1964.2px;top:1866.0px;font-size:16px;line-height:16px;color:#343741;font-weight:normal;font-family:'Liberation Mono', monospace;letter-spacing:-0.6px;">5353</div>
<div class="t" style="left:2309.3px;top:1866.0px;font-size:16px;line-height:16px;color:#343741;font-weight:normal;font-family:'Liberation Mono', monospace;letter-spacing:-0.6px;">02f4bab031b57d1e30553ce08e0ec131</div>
<div class="t" style="left:2819.0px;top:1866.0px;font-size:16px;line-height:16px;color:#343741;font-weight:normal;font-family:'Liberation Mono', monospace;letter-spacing:-0.6px;">block</div>
<svg style="left:20px;top:1909px;" width="20" height="20" viewBox="20 1909 20 20"><path d="M27.6 1914.2 L32.6 1919.2 L27.6 1924.2" fill="none" stroke="#343741" stroke-width="1.3"/></svg>
<div class="t" style="left:58.7px;top:1912.1px;font-size:16px;line-height:16px;color:#343741;font-weight:normal;font-family:'Liberation Mono', monospace;letter-spacing:-0.6px;">Dec 19, 2022 @ 16:08:07.000</div>
<div class="t" style="left:321.5px;top:1912.1px;font-size:16px;line-height:16px;color:#343741;font-weight:normal;font-family:'Liberation Mono', monospace;letter-spacing:-0.6px;">firewall.kali.purple</div>
<div class="t" style="left:661.5px;top:1912.1px;font-size:16px;line-height:16px;color:#343741;font-weight:normal;font-family:'Liberation Mono', monospace;letter-spacing:-0.6px;">-</div>
<div class="t" style="left:1094.3px;top:1912.1px;font-size:16px;line-height:16px;color:#343741;font-weight:normal;font-family:'Liberation Mono', monospace;letter-spacing:-0.6px;">192.168.1.75</div>
<div class="t" style="left:1356.6px;top:1912.1px;font-size:16px;line-height:16px;color:#343741;font-weight:normal;font-family:'Liberation Mono', monospace;letter-spacing:-0.6px;">5353</div>
<div class="t" style="left:1647.2px;top:1912.1px;font-size:16px;line-height:16px;color:#343741;font-weight:normal;font-family:'Liberation Mono', monospace;letter-spacing:-0.6px;">224.0.0.251</div>
<div class="t" style="left:1964.2px;top:1912.1px;font-size:16px;line-height:16px;color:#343741;font-weight:normal;font-family:'Liberation Mono', monospace;letter-spacing:-0.6px;">5353</div>
<div class="t" style="left:2309.3px;top:1912.1px;font-size:16px;line-height:16px;color:#343741;font-weight:normal;font-family:'Liberation Mono', monospace;letter-spacing:-0.6px;">02f4bab031b57d1e30553ce08e0ec131</div>
<div class="t" style="left:2819.0px;top:1912.1px;font-size:16px;line-height:16px;color:#343741;font-weight:normal;font-family:'Liberation Mono', monospace;letter-spacing:-0.6px;">block</div>
<svg style="left:20px;top:1955px;" width="20" height="20" viewBox="20 1955 20 20"><path d="M27.6 1960.4 L32.6 1965.4 L27.6 1970.4" fill="none" stroke="#343741" stroke-width="1.3"/></svg>
<div class="t" style="left:58.7px;top:1958.3px;font-size:16px;line-height:16px;color:#343741;font-weight:normal;font-family:'Liberation Mono', monospace;letter-spacing:-0.6px;">Dec 19, 2022 @ 16:08:06.000</div>
<div class="t" style="left:321.5px;top:1958.3px;font-size:16px;line-height:16px;color:#343741;font-weight:normal;font-family:'Liberation Mono', monospace;letter-spacing:-0.6px;">firewall.kali.purple</div>
<div class="t" style="left:661.5px;top:1958.3px;font-size:16px;line-height:16px;color:#343741;font-weight:normal;font-family:'Liberation Mono', monospace;letter-spacing:-0.6px;">-</div>
<div class="t" style="left:1094.3px;top:1958.3px;font-size:16px;line-height:16px;color:#343741;font-weight:normal;font-family:'Liberation Mono', monospace;letter-spacing:-0.6px;">192.168.254.200</div>
<div class="t" style="left:1356.6px;top:1958.3px;font-size:16px;line-height:16px;color:#343741;font-weight:normal;font-family:'Liberation Mono', monospace;letter-spacing:-0.6px;">&nbsp;-</div>
<div class="t" style="left:1647.2px;top:1958.3px;font-size:16px;line-height:16px;color:#343741;font-weight:normal;font-family:'Liberation Mono', monospace;letter-spacing:-0.6px;">224.0.0.22</div>
<div class="t" style="left:1964.2px;top:1958.3px;font-size:16px;line-height:16px;color:#343741;font-weight:normal;font-family:'Liberation Mono', monospace;letter-spacing:-0.6px;">&nbsp;-</div>
<div class="t" style="left:2309.3px;top:1958.3px;font-size:16px;line-height:16px;color:#343741;font-weight:normal;font-family:'Liberation Mono', monospace;letter-spacing:-0.6px;">02f4bab031b57d1e30553ce08e0ec131</div>
<div class="t" style="left:2819.0px;top:1958.3px;font-size:16px;line-height:16px;color:#343741;font-weight:normal;font-family:'Liberation Mono', monospace;letter-spacing:-0.6px;">block</div>
<div class="r" style="left:0.0px;top:0.0px;width:3094.0px;height:6.5px;background:#25282f;"></div>
<div class="r" style="left:0.0px;top:0.0px;width:3.0px;height:1999.0px;background:#3a3b40;"></div>
<div class="r" style="left:3091.0px;top:0.0px;width:3.0px;height:1999.0px;background:#3a3b40;"></div>
<div class="r" style="left:0.0px;top:1996.0px;width:3094.0px;height:3.0px;background:#2e3035;"></div>
<div class="r" style="left:3px;top:1976px;width:20px;height:20px;overflow:hidden"><div class="r" style="left:0;top:-20px;width:40px;height:40px;border-bottom-left-radius:16px;box-shadow:0 0 0 30px #2e3035"></div></div>
<div class="r" style="left:3071px;top:1976px;width:20px;height:20px;overflow:hidden"><div class="r" style="left:-20px;top:-20px;width:40px;height:40px;border-bottom-right-radius:16px;box-shadow:0 0 0 30px #2e3035"></div></div>
</body></html>
